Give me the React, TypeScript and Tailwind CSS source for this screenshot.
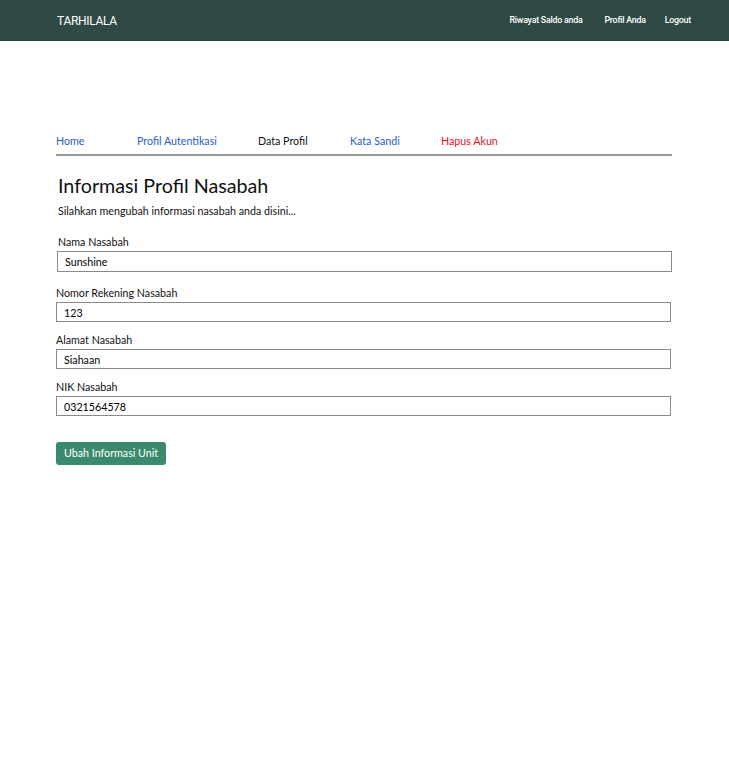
import React from "react";

const body = { fontFamily: "Lato, 'Noto Sans', sans-serif" };
const head = { fontFamily: "Roboto, 'Liberation Sans', sans-serif" };

function Field({ label, value, first }: { label: string; value: string; first?: boolean }) {
  return (
    <div className={first ? "ml-[1px]" : ""}>
      <div className={`text-[10.7px] leading-[16px] text-[#111] ${first ? "pl-[1px]" : ""}`}>{label}</div>
      <input
        readOnly
        value={value}
        className={`mt-[1px] block w-[615px] ${first ? "h-[21px]" : "h-[20px]"} border border-[#8a8a8a] bg-white px-[7px] text-[10.7px] text-black outline-none`}
        style={body}
      />
    </div>
  );
}

export default function App() {
  return (
    <div className="min-h-[762px] w-full bg-white" style={body}>
      <header className="flex h-[41px] items-center justify-between bg-[#2f4a44] pl-[57px] pr-[38px]" style={head}>
        <span className="text-[12px] tracking-tight text-white">TARHILALA</span>
        <nav className="flex items-center text-[8.8px] font-medium tracking-tight text-white">
          <span className="mr-[22px]">Riwayat Saldo anda</span>
          <span className="mr-[19px]">Profil Anda</span>
          <span>Logout</span>
        </nav>
      </header>
      <main className="px-[56px] pt-[92px]">
        <div className="flex w-[616px] border-b-2 border-[#9a9a9a] pb-[5px] text-[10.7px] leading-[16px]">
          <span className="w-[81px] text-[#2a5cc4]">Home</span>
          <span className="w-[121px] text-[#2a5cc4]">Profil Autentikasi</span>
          <span className="w-[92px] text-[#111]">Data Profil</span>
          <span className="w-[91px] text-[#2a5cc4]">Kata Sandi</span>
          <span className="text-[#e0141e]">Hapus Akun</span>
        </div>
        <h1 className="mt-[18px] pl-[2px] text-[19.7px] leading-[24px] text-[#111]">Informasi Profil Nasabah</h1>
        <p className="mt-[5px] pl-[2px] text-[10.7px] leading-[16px] text-[#111]">
          Silahkan mengubah informasi nasabah anda disini...
        </p>
        <div className="mt-[15px]">
          <Field first label="Nama Nasabah" value="Sunshine" />
        </div>
        <div className="mt-[13px]">
          <Field label="Nomor Rekening Nasabah" value="123" />
        </div>
        <div className="mt-[10px]">
          <Field label="Alamat Nasabah" value="Siahaan" />
        </div>
        <div className="mt-[10px]">
          <Field label="NIK Nasabah" value="0321564578" />
        </div>
        <button className="mt-[26px] flex h-[23px] items-center rounded-[3px] bg-[#3b8a6d] px-[8px] text-[10.7px] text-white">
          Ubah Informasi Unit
        </button>
      </main>
    </div>
  );
}
